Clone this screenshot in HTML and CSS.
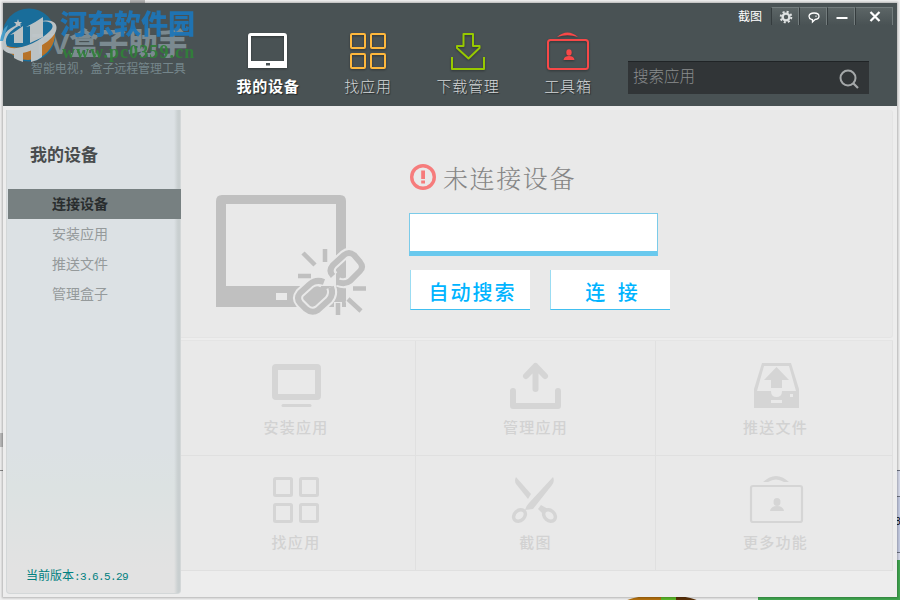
FILE: index.html
```html
<!DOCTYPE html>
<html lang="zh-CN">
<head>
    <meta charset="UTF-8">
    <meta name="viewport" content="width=device-width, initial-scale=1.0">
    <title>TV盒子助手</title>
    <link rel="stylesheet" href="styles.css">
</head>
<body>
    <!-- desktop behind the window -->
    <div class="desk desk-top"></div>
    <div class="desk desk-scroll"></div>
    <div class="desk desk-line"></div>
    <div class="desk desk-list"><span>8</span></div>
    <div class="desk desk-green"></div>
    <div class="desk desk-orange"></div>

    <div class="window">
        <header class="header">
            <div class="brand">
                <div class="brand-name">TV盒子助手</div>
                <div class="brand-slogan">智能电视，盒子远程管理工具</div>
                <div class="watermark">
                    <svg class="watermark-logo" width="58" height="60" viewBox="0 0 58 60">
                        <circle cx="29" cy="30" r="26.500" fill="#176f9f"/>
                        <path d="M4 40Q27 49 55 25A27 27 0 0 1 4 40Z" fill="#bd7426"/>
                        <path d="M2 35C6 51 35 41 50 26C56 20 51 15 39 17C55 12 61 21 53 31C42 45 7 57 2 42Z" fill="#c3c9cc"/>
                        <path d="M2 43C-1 30 10 21 22 19C10 25 3 33 7 41Z" fill="#c3c9cc"/>
                        <path d="M14 38V29L10 30Q16 26 23 21V38ZM30 38V21L26 22Q36 17 43 12V32Z" fill="#c3c9cc"/>
                        <path d="M14 47L23 46V57Q17 55 14 53ZM31 44L42 38V52Q37 56 31 57Z" fill="#c3c9cc"/>
                        <path d="M18 14l1 3h3l-2 2 1 3-3-2-3 2 1-3-2-2h3z" fill="#c3c9cc"/>
                        <path d="M0 36Q2 24 8 20L3 36Z" fill="#469fcd"/>
                    </svg>
                    <div class="watermark-name">河东软件园</div>
                    <div class="watermark-url">www.pc0359.cn</div>
                </div>
            </div>
            <nav class="nav">
                <a class="nav-item active">
                    <svg width="44" height="40" viewBox="0 0 44 40">
                        <path fill="#fff" fill-rule="evenodd" d="M5 3H38Q41 3 41 6V38H2V6Q2 3 5 3ZM5 6V31H38V6Z"/>
                        <rect x="20" y="33" width="4" height="2.500" fill="#495254"/>
                    </svg>
                    <span>我的设备</span>
                </a>
                <a class="nav-item">
                    <svg width="44" height="40" viewBox="0 0 44 40" fill="none" stroke="#ffb83d" stroke-width="2">
                        <rect x="5" y="4" width="14" height="14" rx="1"/>
                        <rect x="25" y="4" width="14" height="14" rx="1"/>
                        <rect x="5" y="24" width="14" height="14" rx="1"/>
                        <rect x="25" y="24" width="14" height="14" rx="1"/>
                    </svg>
                    <span>找应用</span>
                </a>
                <a class="nav-item">
                    <svg width="44" height="40" viewBox="0 0 44 40" fill="none" stroke="#97c900" stroke-width="2" stroke-linejoin="round">
                        <path d="M17.500 4H27V16H33.500V18L22.500 28.500L11 18V16H17.500Z"/>
                        <path d="M6 27V39H38V27"/>
                    </svg>
                    <span>下载管理</span>
                </a>
                <a class="nav-item">
                    <svg width="44" height="40" viewBox="0 0 44 40">
                        <path d="M11 7Q21.500-2 32 7Q21.500 3.500 11 7Z" fill="#f84848"/>
                        <rect x="2" y="10" width="40" height="29" rx="2.500" fill="none" stroke="#f84848" stroke-width="2"/>
                        <ellipse cx="23" cy="22.500" rx="2.700" ry="3.200" fill="#f84848"/>
                        <path d="M17.500 30Q18 26 23 26Q28 26 28.500 30Z" fill="#f84848"/>
                    </svg>
                    <span>工具箱</span>
                </a>
            </nav>
            <div class="tools">
                <div class="titlebar">
                    <span class="capture">截图</span>
                    <button class="win-btn">
                        <svg width="14" height="14" viewBox="0 0 14 14">
                            <circle cx="7" cy="7" r="5.300" fill="none" stroke="#dfe2e2" stroke-width="2" stroke-dasharray="2.080 2.080"/>
                            <circle cx="7" cy="7" r="3.400" fill="none" stroke="#dfe2e2" stroke-width="2.400"/>
                        </svg>
                    </button>
                    <button class="win-btn">
                        <svg width="14" height="14" viewBox="0 0 14 14" fill="none" stroke="#fff" stroke-width="1.300">
                            <path d="M4.500 9.500Q2 8.500 2 6.200Q2.500 3 7 3Q12 3 12 6.200Q12 9 8 9.500L5.500 12V9.600Z"/>
                            <path d="M9 5.500V7" stroke-width="1"/>
                        </svg>
                    </button>
                    <button class="win-btn">
                        <svg width="14" height="14" viewBox="0 0 14 14"><rect x="1.500" y="7" width="11" height="2" fill="#fff"/></svg>
                    </button>
                    <button class="win-btn close">
                        <svg width="14" height="14" viewBox="0 0 14 14"><path d="M2.500 2L11.500 11M11.500 2L2.500 11" stroke="#fff" stroke-width="2.200"/></svg>
                    </button>
                </div>
                <div class="search">
                    <input type="text" placeholder="搜索应用">
                    <svg width="22" height="22" viewBox="0 0 22 22" fill="none" stroke="#a4a8a9">
                        <circle cx="10" cy="10" r="7.500" stroke-width="2"/>
                        <path d="M15 15L20 20" stroke-width="2.200"/>
                    </svg>
                </div>
            </div>
        </header>

        <div class="content">
            <aside class="sidebar">
                <h2>我的设备</h2>
                <ul>
                    <li class="active">连接设备</li>
                    <li>安装应用</li>
                    <li>推送文件</li>
                    <li>管理盒子</li>
                </ul>
                <div class="version">当前版本<span>:3.6.5.29</span></div>
            </aside>

            <main class="main">
                <section class="device">
                    <svg class="device-icon" width="152" height="124" viewBox="0 0 152 124">
                        <path fill="#c0c0c0" fill-rule="evenodd" d="M6 0H124Q130 0 130 6V112H0V6Q0 0 6 0ZM10 9V91H120V9ZM60 98V105H71V98Z"/>
                        <path d="M87 58L99 70M109 54V68M82 81H95M137 93.500H150M132 104L145 116M122 107V121" fill="none" stroke="#e9e9e9" stroke-width="8"/>
                        <g fill="none" stroke="#e9e9e9" stroke-width="10" stroke-linejoin="round">
                            <path d="M118 81Q112 76 117 70L128 60Q133 56 138 60L144 67Q148 72 144 76L134 86Q129 90 122 87"/>
                            <path d="M107 88Q100 84 94 89L84 98Q80 103 84 108L90 114Q96 119 102 115L113 105Q118 99 115 92"/>
                        </g>
                        <g fill="none" stroke="#c0c0c0" stroke-width="6">
                            <path d="M117 81Q112 76 117 70L128 60Q133 56 138 60L144 67Q148 72 144 76L134 86Q129 90 121 87"/>
                            <path d="M108 87Q100 84 94 89L84 98Q80 103 84 108L90 114Q96 119 102 115L113 105Q118 99 115 92"/>
                        </g>
                        <path d="M87 58L99 70M109 54V67M82 81H95M137 93.500H150M132 104L145 116M122 108V120" fill="none" stroke="#c0c0c0" stroke-width="4.500"/>
                    </svg>
                    <div class="connect">
                        <div class="status">
                            <svg width="26" height="26" viewBox="0 0 26 26">
                                <circle cx="13" cy="13" r="11.300" fill="none" stroke="#f67c7c" stroke-width="3.400"/>
                                <rect x="11.200" y="6.500" width="3.800" height="8.500" fill="#f67c7c"/>
                                <rect x="11.200" y="16.500" width="3.800" height="3" fill="#f67c7c"/>
                            </svg>
                            <span>未连接设备</span>
                        </div>
                        <input class="address" type="text">
                        <div class="buttons">
                            <button>自动搜索</button>
                            <button class="spaced">连 接</button>
                        </div>
                    </div>
                </section>

                <section class="grid">
                    <div class="cell">
                        <svg width="56" height="52" viewBox="0 0 56 52">
                            <rect x="7" y="8" width="43" height="30" rx="1" fill="none" stroke="#d5d5d5" stroke-width="6"/>
                            <path d="M15 46.500H42" stroke="#d5d5d5" stroke-width="3" stroke-linecap="round"/>
                        </svg>
                        <span>安装应用</span>
                    </div>
                    <div class="cell">
                        <svg width="56" height="52" viewBox="0 0 56 52" fill="none" stroke="#d5d5d5" stroke-width="6" stroke-linecap="round" stroke-linejoin="round">
                            <path d="M27.500 30V7.500M18 17L27.500 7L37 17"/>
                            <path d="M5 32V47H50V32"/>
                        </svg>
                        <span>管理应用</span>
                    </div>
                    <div class="cell">
                        <svg width="56" height="52" viewBox="0 0 56 52">
                            <path fill="#d5d5d5" fill-rule="evenodd" d="M14 4H43L51 30V49H6V30ZM16 7L9 32H23Q23 38 28.500 38Q34 38 34 32H48L41 7Z"/>
                            <path d="M28.500 8L41 21H34V29H23V21H16Z" fill="#d5d5d5"/>
                            <path d="M23 41H34V44H23ZM42 35H45V38H42Z" fill="#e9e9e9"/>
                        </svg>
                        <span>推送文件</span>
                    </div>
                    <div class="cell">
                        <svg width="56" height="52" viewBox="0 0 56 52" fill="none" stroke="#d5d5d5" stroke-width="3">
                            <rect x="6.500" y="4.500" width="17" height="17" rx="1"/>
                            <rect x="32.500" y="4.500" width="17" height="17" rx="1"/>
                            <rect x="6.500" y="30.500" width="17" height="17" rx="1"/>
                            <rect x="32.500" y="30.500" width="17" height="17" rx="1"/>
                        </svg>
                        <span>找应用</span>
                    </div>
                    <div class="cell">
                        <svg width="56" height="52" viewBox="0 0 56 52">
                            <path d="M8 3L23 20L20 25L8 10Q6 7 8 3Z" fill="#d5d5d5"/>
                            <path d="M45 3L21 29Q18 32 17 36L25 35L44 11Q47 7 45 3Z" fill="#d5d5d5"/>
                            <path d="M30 35L33 31L40 35L35 40Z" fill="#d5d5d5"/>
                            <ellipse cx="11.500" cy="41.500" rx="5" ry="6.500" transform="rotate(48 11.500 41.500)" fill="none" stroke="#d5d5d5" stroke-width="3.500"/>
                            <ellipse cx="41.500" cy="41.500" rx="5" ry="6.500" transform="rotate(-48 41.500 41.500)" fill="none" stroke="#d5d5d5" stroke-width="3.500"/>
                        </svg>
                        <span>截图</span>
                    </div>
                    <div class="cell">
                        <svg width="56" height="52" viewBox="0 0 56 52">
                            <path d="M15 8Q28-4 41 8L36 8Q28 3 20 8Z" fill="#d5d5d5"/>
                            <rect x="3" y="12" width="51" height="36" rx="2" fill="none" stroke="#d5d5d5" stroke-width="2.200"/>
                            <ellipse cx="29" cy="28" rx="3.500" ry="4" fill="#d5d5d5"/>
                            <path d="M22 37Q23 32 29 32Q35 32 36 37Z" fill="#d5d5d5"/>
                        </svg>
                        <span>更多功能</span>
                    </div>
                </section>
            </main>
        </div>
    </div>
</body>
</html>
```
FILE: styles.css
```css
* {
    box-sizing: border-box;
}
body {
    position: relative;
    width: 900px;
    height: 600px;
    margin: 0;
    padding: 3px;
    overflow: hidden;
    background-color: #eeeeee;
    font-family: "Liberation Sans", "Noto Sans CJK SC", sans-serif;
}
svg {
    display: block;
    flex: none;
}
input, button {
    border: none;
    padding: 0;
    border-radius: 0;
    outline: none;
    font-family: inherit;
}

/* desktop */
.desk {
    position: absolute;
}
.desk-top {
    left: 130px;
    top: 0;
    width: 15px;
    height: 3px;
    background-color: #b5b5b5;
}
.desk-scroll {
    left: 0;
    top: 433px;
    width: 3px;
    height: 14px;
    background-color: #b9b9b9;
}
.desk-line {
    left: 0;
    top: 470px;
    width: 3px;
    height: 1px;
    background-color: #888;
}
.desk-list {
    right: 0;
    top: 470px;
    width: 3px;
    height: 90px;
    overflow: hidden;
    background: linear-gradient(#6c7180 0 1px, #d5d9ea 1px 26px, #6c7180 26px 27px, #c4cbe2 27px 82px, #6c7180 82px 83px, #d5d9ea 83px);
}
.desk-list span {
    display: block;
    margin: 46px 0 0 -2px;
    font-size: 10px;
    line-height: 12px;
}
.desk-green {
    left: 758px;
    right: 0;
    top: 560px;
    bottom: 0;
    background-color: #40a650;
}
.desk-orange {
    left: 622px;
    top: 595px;
    width: 80px;
    height: 20px;
    border-radius: 50%;
    background: linear-gradient(90deg, #b3700f 49%, #5cb82b 49% 68%, #5b3109 68%);
}

/* window */
.window {
    position: relative;
    display: flex;
    flex-direction: column;
    width: 894px;
    height: 594px;
    background-color: #ededed;
    box-shadow: 0 0 2px 1px rgba(0, 0, 0, 0.25);
}
.header {
    display: flex;
    height: 103px;
    background-color: #495254;
}
.brand {
    position: relative;
    width: 215px;
    padding: 23px 0 0 29px;
    white-space: nowrap;
}
.brand-name {
    height: 35px;
    line-height: 35px;
    font-size: 30px;
    font-weight: 900;
    color: #7b8a90;
    letter-spacing: -0.6px;
}
.brand-slogan {
    height: 16px;
    margin-left: -1px;
    line-height: 16px;
    font-size: 12px;
    letter-spacing: -0.1px;
    color: #75868b;
}
.watermark {
    position: absolute;
    left: -3px;
    top: 1px;
    width: 200px;
    height: 60px;
    opacity: 0.94;
}
.watermark-logo {
    position: absolute;
    left: 0;
    top: 1px;
}
.watermark-name {
    margin: 5px 0 0 60px;
    height: 32px;
    line-height: 32px;
    font-size: 27px;
    font-weight: 900;
    color: #1d76b8;
}
.watermark-url {
    margin: 1px 0 0 62px;
    height: 20px;
    line-height: 20px;
    font-family: "Liberation Serif", serif;
    font-size: 18px;
    font-weight: bold;
    letter-spacing: 1.1px;
    color: #31803a;
}
.nav {
    display: flex;
}
.nav-item {
    display: flex;
    flex-direction: column;
    align-items: center;
    width: 100px;
    padding-top: 27px;
    color: #d5d7d8;
    font-size: 15px;
    font-weight: 300;
    line-height: 20px;
    letter-spacing: 0.8px;
    text-shadow: 1px 1px 1px #252b2c;
}
.nav-item svg {
    filter: drop-shadow(0 1px 1px rgba(0, 0, 0, 0.35));
}
.nav-item span {
    margin-top: 7px;
}
.nav-item.active {
    color: #fff;
    font-weight: bold;
}
.tools {
    display: flex;
    flex-direction: column;
    flex: 1;
    align-items: flex-end;
    padding: 4px 4px 0 0;
}
.titlebar {
    display: flex;
    height: 20px;
}
.capture {
    margin-right: 9px;
    font-size: 12px;
    line-height: 21px;
    color: #fff;
}
.win-btn {
    display: flex;
    justify-content: center;
    width: 28px;
    height: 18px;
    padding: 2px 0 0 1px;
    border-top: 1px solid #737c7d;
    border-right: 1px solid #737c7d;
    border-left: 1px solid #353c3e;
    background: linear-gradient(#5c6566, #495254);
}
.win-btn.close {
    width: 38px;
}
.search {
    display: flex;
    align-items: center;
    width: 241px;
    height: 33px;
    margin: 34px 24px 0 0;
    padding: 0 9px 0 5px;
    border-top: 1px solid #202426;
    background-color: #313537;
}
.search input {
    flex: 1;
    min-width: 0;
    height: 28px;
    padding-bottom: 2px;
    background: none;
    font-size: 15.5px;
    font-weight: 300;
}
.search input::placeholder {
    color: #8a8d8e;
}
.search svg {
    margin-top: 2px;
}
.content {
    display: flex;
    flex: 1;
    padding: 4px 4px 3px 3px;
}

/* sidebar */
.sidebar {
    display: flex;
    flex-direction: column;
    width: 175px;
    border: 1px solid #d3d7d8;
    border-top: none;
    border-radius: 0 0 4px 4px;
    background: linear-gradient(90deg, transparent 167px, #c9cfd0 171px), linear-gradient(#dce1e4 70%, #dce2e2 78%, #e2e2e2 95%);
}
.sidebar h2 {
    margin: 34px 0 21px 23px;
    font-size: 17px;
    line-height: 24px;
    color: #4a4d4e;
}
.sidebar ul {
    margin: 0 -1px 0 1px;
    padding: 0;
    list-style: none;
}
.sidebar li {
    height: 30px;
    padding-left: 44px;
    font-size: 14px;
    line-height: 30px;
    color: #959a9b;
}
.sidebar li.active {
    background-color: #778081;
    color: #292d2e;
    font-weight: bold;
}
.version {
    margin: auto 0 8px 19px;
    font-size: 12px;
    line-height: 16px;
    color: #008080;
    white-space: nowrap;
}
.version span {
    font-family: "Liberation Mono", monospace;
    font-size: 11px;
    letter-spacing: -0.6px;
}

/* main */
.main {
    flex: 1;
    display: flex;
    flex-direction: column;
    gap: 2px;
}
.device {
    display: flex;
    height: 228px;
    padding: 50px 0 0 35px;
    border: solid #e4e4e4;
    border-width: 0 1px 1px 0;
    border-radius: 0 3px 3px 0;
    background-color: #e9e9e9;
}
.device-icon {
    margin-top: 35px;
}
.connect {
    margin-left: 41px;
}
.status {
    display: flex;
    align-items: center;
    gap: 7px;
    height: 34px;
    color: #858585;
    font-family: "Noto Serif CJK SC", "Noto Sans CJK SC", serif;
    font-size: 25px;
    font-weight: 300;
    line-height: 34px;
    letter-spacing: 1.6px;
}
.status svg {
    margin-left: 1px;
}
.address {
    display: block;
    width: 249px;
    height: 43px;
    margin: 19px 0 14px;
    border: 1px solid #7bcbe9;
    border-bottom: 5px solid #69c9ee;
    background-color: #fff;
}
.buttons {
    display: flex;
    gap: 20px;
    padding-left: 1px;
}
.buttons button {
    width: 120px;
    height: 40px;
    padding: 7px 0 0 4px;
    border-left: 1px solid #9bdcf2;
    border-bottom: 1px solid #41bff0;
    background-color: #fff;
    color: #00b4ff;
    font-size: 20px;
    font-weight: 500;
    line-height: 30px;
    letter-spacing: 2px;
}
.buttons .spaced {
    word-spacing: 3px;
}
.grid {
    display: grid;
    grid-template-columns: 235px 240px 237px;
    grid-template-rows: 115px 115px;
    border-top: 1px solid #e4e4e4;
    background-color: #e9e9e9;
}
.cell {
    display: flex;
    flex-direction: column;
    align-items: center;
    padding-top: 18px;
    border-right: 1px solid #e0e0e0;
    border-bottom: 1px solid #e0e0e0;
    color: #d2d2d2;
    font-size: 15px;
    font-weight: 500;
    line-height: 20px;
    letter-spacing: 1.3px;
}
.cell span {
    margin-top: 7px;
}
.cell:nth-child(3n+1) {
    padding-right: 4px;
}
.cell:nth-child(3n) {
    padding-left: 3px;
}
```
